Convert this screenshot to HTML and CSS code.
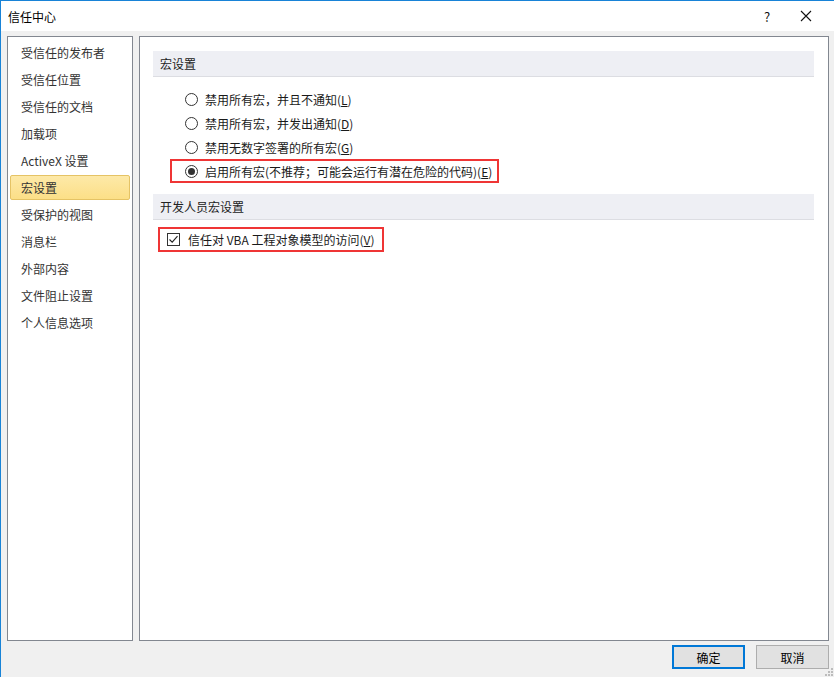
FILE: index.html
```html
<!DOCTYPE html>
<html lang="zh-CN">
<head>
    <meta charset="UTF-8">
    <title>信任中心</title>
    <link rel="stylesheet" href="styles.css">
</head>
<body>

    <div class="window">
        <div class="titlebar">
            <span class="title">信任中心</span>
            <span class="help">?</span>
            <span class="close">
                <svg width="12" height="12" viewBox="0 0 12 12"><path d="M1 1 L11 11 M11 1 L1 11" stroke="#111" stroke-width="1.1" fill="none"/></svg>
            </span>
        </div>

        <div class="main">
            <ul class="nav">
                <li>受信任的发布者</li>
                <li>受信任位置</li>
                <li>受信任的文档</li>
                <li>加载项</li>
                <li>ActiveX 设置</li>
                <li class="active">宏设置</li>
                <li>受保护的视图</li>
                <li>消息栏</li>
                <li>外部内容</li>
                <li>文件阻止设置</li>
                <li>个人信息选项</li>
            </ul>

            <div class="content">
                <div class="section-head">宏设置</div>
                <div class="options">
                    <div class="option"><span class="radio"></span>禁用所有宏，并且不通知(<u>L</u>)</div>
                    <div class="option"><span class="radio"></span>禁用所有宏，并发出通知(<u>D</u>)</div>
                    <div class="option"><span class="radio"></span>禁用无数字签署的所有宏(<u>G</u>)</div>
                    <div class="option marked"><span class="radio checked"></span>启用所有宏(不推荐；可能会运行有潜在危险的代码)(<u>E</u>)</div>
                </div>

                <div class="section-head second">开发人员宏设置</div>
                <div class="check-row marked">
                    <span class="checkbox">
                        <svg width="11" height="11" viewBox="0 0 11 11"><path d="M1.5 5.5 L4.2 8.2 L9.5 2.2" stroke="#222" stroke-width="1.1" fill="none"/></svg>
                    </span>信任对 VBA 工程对象模型的访问(<u>V</u>)
                </div>
            </div>
        </div>

        <div class="footer">
            <button class="btn primary">确定</button>
            <button class="btn">取消</button>
            <svg class="grip" width="8" height="8" viewBox="0 0 8 8">
                <rect x="6" y="0" width="2" height="2" fill="#bcbcbc"/>
                <rect x="3" y="3" width="2" height="2" fill="#bcbcbc"/>
                <rect x="6" y="3" width="2" height="2" fill="#bcbcbc"/>
                <rect x="0" y="6" width="2" height="2" fill="#bcbcbc"/>
                <rect x="3" y="6" width="2" height="2" fill="#bcbcbc"/>
                <rect x="6" y="6" width="2" height="2" fill="#bcbcbc"/>
            </svg>
        </div>
    </div>

</body>
</html>
```

FILE: styles.css
```css
* {
    box-sizing: border-box;
}

body {
    margin: 0;
    padding: 0;
    font-family: "Noto Sans CJK SC", "Noto Sans", sans-serif;
    font-size: 12px;
    color: #1a1a1a;
    background-color: #f0f0f0;
}

.window {
    width: 834px;
    height: 677px;
    border-top: 1px solid #1883d7;
    border-left: 1px solid #1883d7;
    background-color: #f0f0f0;
    position: relative;
}

.titlebar {
    height: 30px;
    background-color: #fff;
    display: flex;
    align-items: center;
    padding-left: 7px;
}

.title {
    flex: 1;
    color: #000;
}

.help {
    width: 20px;
    text-align: center;
    font-size: 13px;
    color: #111;
    margin-right: 23px;
}

.close {
    width: 14px;
    display: flex;
    align-items: center;
    margin-right: 20px;
}

.main {
    display: flex;
    gap: 6px;
    padding: 5px 5px 0 6px;
}

.nav {
    list-style: none;
    margin: 0;
    width: 126px;
    height: 605px;
    padding: 3px 2px 0 2px;
    background-color: #fff;
    border: 1px solid #828790;
}

.nav li {
    height: 25px;
    line-height: 23px;
    margin-bottom: 2px;
    padding-left: 10px;
    border: 1px solid transparent;
    border-radius: 2px;
    color: #333;
    white-space: nowrap;
}

.nav li.active {
    background: linear-gradient(#fde9a8, #fcdf87);
    border-color: #e5c365;
}

.content {
    flex: 1;
    height: 605px;
    background-color: #fff;
    border: 1px solid #828790;
    padding: 14px 14px 0 13px;
}

.section-head {
    height: 26px;
    line-height: 25px;
    padding-left: 7px;
    background-color: #eeeff4;
    border-bottom: 1px solid #dcdde2;
    color: #222;
}

.section-head.second {
    margin-top: 11px;
}

.options {
    padding-top: 10px;
}

.option {
    display: flex;
    width: fit-content;
    align-items: center;
    height: 24px;
    margin-left: 17px;
    padding: 0 5px 0 13px;
    border: 2px solid transparent;
    white-space: nowrap;
}

.option.marked,
.check-row.marked {
    border-color: #ef3535;
}

.radio {
    width: 13px;
    height: 13px;
    border: 1px solid #333;
    border-radius: 50%;
    margin-right: 7px;
    display: flex;
    align-items: center;
    justify-content: center;
}

.radio.checked::after {
    content: "";
    width: 7px;
    height: 7px;
    border-radius: 50%;
    background-color: #333;
}

.check-row {
    display: flex;
    width: fit-content;
    align-items: center;
    height: 25px;
    margin: 7px 0 0 5px;
    padding: 0 8px 0 7px;
    border: 2px solid transparent;
    white-space: nowrap;
}

.checkbox {
    width: 13px;
    height: 13px;
    border: 1px solid #333;
    margin-right: 8px;
    display: flex;
    align-items: center;
    justify-content: center;
}

u {
    text-decoration: underline;
    text-underline-offset: 1px;
}

.footer {
    display: flex;
    justify-content: flex-end;
    gap: 11px;
    padding: 4px 5px 0 0;
}

.btn {
    width: 73px;
    height: 24px;
    padding: 0;
    font-family: inherit;
    font-size: 12px;
    color: #000;
    background-color: #e1e1e1;
    border: 1px solid #adadad;
}

.btn.primary {
    border: 2px solid #0078d7;
}

.grip {
    position: absolute;
    right: 1px;
    bottom: 1px;
}
```
